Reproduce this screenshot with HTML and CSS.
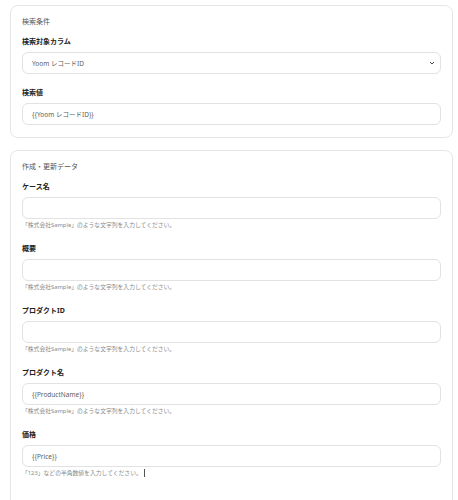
FILE: index.html
```html
<!DOCTYPE html>
<html lang="ja">
<head>
    <meta charset="UTF-8">
    <meta name="viewport" content="width=device-width, initial-scale=1.0">
    <title>検索条件</title>
    <link rel="stylesheet" href="styles.css">
</head>
<body>
    <div class="page">
        <section class="card">
            <div class="card-title">検索条件</div>
            <div class="field">
                <label class="field-label" for="column">検索対象カラム</label>
                <div class="select-wrap">
                    <select id="column" class="input">
                        <option>Yoom レコードID</option>
                    </select>
                    <svg class="chevron" width="6" height="4" viewBox="0 0 6 4">
                        <path d="M1 1l2 2 2-2" fill="none" stroke="#444" stroke-width="1"/>
                    </svg>
                </div>
            </div>
            <div class="field">
                <label class="field-label" for="value">検索値</label>
                <input type="text" id="value" class="input" value="{{Yoom レコードID}}">
            </div>
        </section>

        <section class="card card-long">
            <div class="card-title">作成・更新データ</div>
            <div class="field">
                <label class="field-label" for="caseName">ケース名</label>
                <input type="text" id="caseName" class="input">
                <p class="help">「株式会社Sample」のような文字列を入力してください。</p>
            </div>
            <div class="field">
                <label class="field-label" for="summary">概要</label>
                <input type="text" id="summary" class="input">
                <p class="help">「株式会社Sample」のような文字列を入力してください。</p>
            </div>
            <div class="field">
                <label class="field-label" for="productId">プロダクトID</label>
                <input type="text" id="productId" class="input">
                <p class="help">「株式会社Sample」のような文字列を入力してください。</p>
            </div>
            <div class="field">
                <label class="field-label" for="productName">プロダクト名</label>
                <input type="text" id="productName" class="input" value="{{ProductName}}">
                <p class="help">「株式会社Sample」のような文字列を入力してください。</p>
            </div>
            <div class="field">
                <label class="field-label" for="price">価格</label>
                <input type="text" id="price" class="input" value="{{Price}}">
                <p class="help">「123」などの半角数値を入力してください。<span class="caret"></span></p>
            </div>
        </section>
    </div>
</body>
</html>
```

FILE: styles.css
```css
body {
    margin: 0;
    background-color: #ffffff;
    font-family: "Noto Sans", "Noto Sans CJK JP", sans-serif;
    color: #333333;
}
.page {
    padding: 5px 5px 0 10px;
    display: flex;
    flex-direction: column;
    gap: 12px;
}
.card {
    border: 1px solid #e6e6e6;
    border-radius: 8px;
    padding: 10px 11px 12px 11px;
    display: flex;
    flex-direction: column;
}
.card-long {
    padding-bottom: 40px;
}
.card-title {
    font-size: 7px;
    line-height: 12px;
    color: #555555;
    margin-bottom: 8px;
}
.field {
    display: flex;
    flex-direction: column;
    margin-bottom: 13px;
}
.field:last-child {
    margin-bottom: 0;
}
.field-label {
    font-size: 7px;
    font-weight: bold;
    line-height: 12px;
    color: #222222;
    margin-bottom: 4px;
}
.input {
    display: block;
    box-sizing: border-box;
    width: 100%;
    height: 22px;
    padding: 0 9px;
    border: 1px solid #e2e2e2;
    border-radius: 6px;
    background: #ffffff;
    font-family: "Noto Sans", "Noto Sans CJK JP", sans-serif;
    font-size: 6.5px;
    color: #606060;
    outline: none;
}
select.input {
    -webkit-appearance: none;
    appearance: none;
}
.select-wrap {
    position: relative;
}
.chevron {
    position: absolute;
    right: 6px;
    top: 9px;
}
.help {
    margin: 1px 0 0 0;
    font-size: 5.8px;
    line-height: 10px;
    color: #8a8a8a;
}
.caret {
    display: inline-block;
    width: 1px;
    height: 8px;
    margin-left: 2px;
    vertical-align: middle;
    background: #555555;
}
```
